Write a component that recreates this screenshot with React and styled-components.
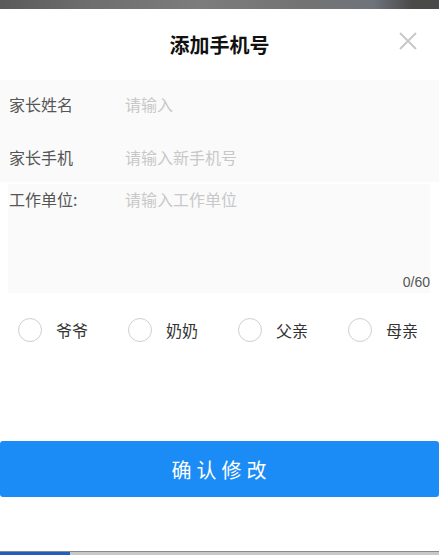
import React, { useState } from "react";
import styled, { createGlobalStyle } from "styled-components";

const GlobalStyle = createGlobalStyle`
  html, body {
    margin: 0;
    padding: 0;
    background: #fff;
    font-family: "Noto Sans CJK SC", "Liberation Sans", sans-serif;
  }
`;

const relations = ["爷爷", "奶奶", "父亲", "母亲"];

const App = () => {
  const [picked, setPicked] = useState(null);
  return (
    <Page>
      <GlobalStyle />
      <Backdrop />
      <Sheet>
        <Header>
          <Title>添加手机号</Title>
          <Close aria-label="close">
            <svg width="20" height="20" viewBox="0 0 20 20">
              <path
                d="M2 2L18 18M18 2L2 18"
                stroke="#c8c8c8"
                strokeWidth="2"
                fill="none"
              />
            </svg>
          </Close>
        </Header>

        <Fields>
          <Row $first>
            <Label>家长姓名</Label>
            <Input placeholder="请输入" />
          </Row>
          <Row>
            <Label>家长手机</Label>
            <Input placeholder="请输入新手机号" />
          </Row>
        </Fields>

        <AreaBox>
          <AreaTop>
            <Label>工作单位:</Label>
            <Area placeholder="请输入工作单位" maxLength={60} />
          </AreaTop>
          <Count>0/60</Count>
        </AreaBox>

        <Radios>
          {relations.map((r, i) => (
            <RadioItem key={r} onClick={() => setPicked(i)}>
              <Circle $on={picked === i} />
              <span>{r}</span>
            </RadioItem>
          ))}
        </Radios>

        <Submit>确认修改</Submit>
        <Footer />
      </Sheet>
      <Progress>
        <ProgressFill />
      </Progress>
    </Page>
  );
};

const Page = styled.div`
  width: 439px;
  height: 555px;
  display: flex;
  flex-direction: column;
  overflow: hidden;
  background: #fff;
`;

const Backdrop = styled.div`
  height: 9px;
  flex-shrink: 0;
  background: linear-gradient(
    90deg,
    #5a5a5a 0%,
    #6e6e6e 20%,
    #7c7c7c 45%,
    #737373 70%,
    #6f747c 85%,
    #4a4a48 94%
  );
`;

const Sheet = styled.div`
  flex: 1;
  display: flex;
  flex-direction: column;
  background: #fff;
  border-radius: 4px 4px 0 0;
`;

const Header = styled.div`
  position: relative;
  height: 71px;
  display: flex;
  align-items: center;
  justify-content: center;
`;

const Title = styled.h1`
  margin: 0;
  font-size: 20px;
  font-weight: 700;
  color: #111;
`;

const Close = styled.button`
  position: absolute;
  right: 21px;
  top: 22px;
  padding: 0;
  border: 0;
  background: none;
  display: flex;
`;

const Fields = styled.div`
  background: #fafafa;
  display: flex;
  flex-direction: column;
`;

const Row = styled.div`
  height: ${(p) => (p.$first ? "52px" : "50px")};
  display: flex;
  align-items: center;
  padding: 0 9px ${(p) => (p.$first ? "4px" : "0")};
  box-sizing: border-box;
`;

const Label = styled.label`
  width: 116px;
  flex-shrink: 0;
  font-size: 16px;
  color: #555;
`;

const Input = styled.input`
  flex: 1;
  border: 0;
  outline: none;
  background: transparent;
  font-family: inherit;
  font-size: 16px;
  color: #333;
  padding: 0;
  &::placeholder {
    color: #c8c8c8;
  }
`;

const AreaBox = styled.div`
  margin: 2px 9px 0 8px;
  height: 109px;
  background: #fafafa;
  display: flex;
  flex-direction: column;
  padding: 3px 0 3px 1px;
  box-sizing: border-box;
`;

const AreaTop = styled.div`
  flex: 1;
  display: flex;
  align-items: flex-start;
`;

const Area = styled.textarea`
  flex: 1;
  height: 70px;
  resize: none;
  border: 0;
  outline: none;
  background: transparent;
  font-family: inherit;
  font-size: 16px;
  line-height: 24px;
  padding: 0;
  &::placeholder {
    color: #c8c8c8;
  }
`;

const Count = styled.div`
  align-self: flex-end;
  font-family: "Liberation Sans", sans-serif;
  font-size: 14px;
  color: #555;
`;

const Radios = styled.div`
  display: flex;
  padding: 25px 0 0 18px;
  height: 148px;
  box-sizing: border-box;
`;

const RadioItem = styled.div`
  width: 110px;
  flex-shrink: 0;
  height: 24px;
  display: flex;
  align-items: center;
  gap: 14px;
  font-size: 16px;
  color: #333;
  cursor: pointer;
`;

const Circle = styled.span`
  width: 22px;
  height: 22px;
  border-radius: 50%;
  border: 1px solid ${(p) => (p.$on ? "#1b8cf5" : "#cfcfcf")};
  background: ${(p) => (p.$on ? "#1b8cf5" : "#fff")};
`;

const Submit = styled.button`
  height: 56px;
  border: 0;
  border-radius: 3px;
  background: #1b8cf5;
  color: #fff;
  font-family: inherit;
  font-size: 20px;
  letter-spacing: 5px;
  padding: 0 0 0 4px;
`;

const Footer = styled.div`
  flex: 1;
`;

const Progress = styled.div`
  height: 3px;
  flex-shrink: 0;
  background: #c8c8c8;
  border-top: 1px solid #8a8a8a;
  display: flex;
`;

const ProgressFill = styled.div`
  width: 70px;
  background: #1f5fbf;
`;

export default App;
